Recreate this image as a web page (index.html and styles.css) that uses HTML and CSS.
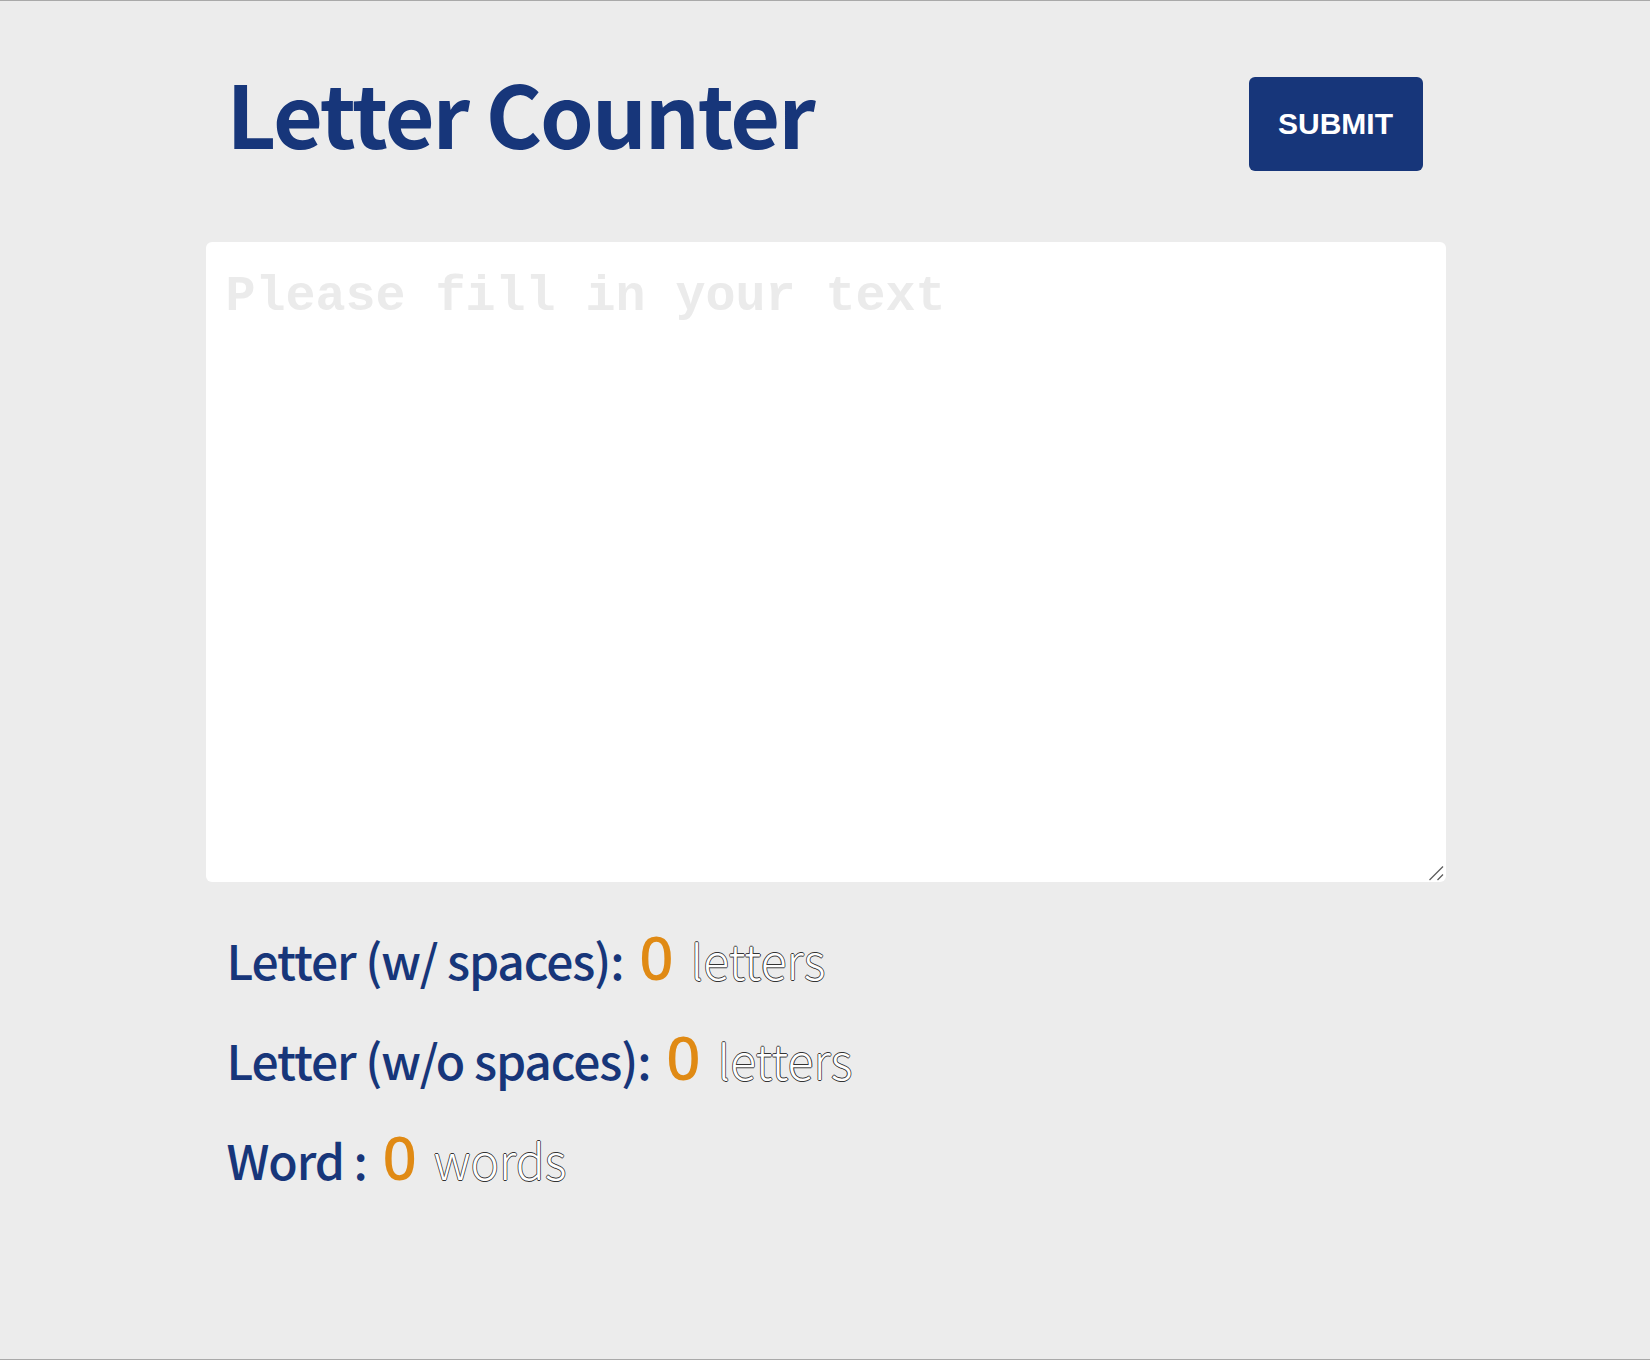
FILE: index.html
```html
<!DOCTYPE html>
<html lang="en">
<head>
<meta charset="utf-8">
<title>Letter Counter</title>
<link rel="stylesheet" href="styles.css">
</head>
<body>
<div class="page">
  <div class="container">
    <header class="header">
      <h1 class="title">Letter Counter</h1>
      <button class="submit" type="button">SUBMIT</button>
    </header>
    <div class="input-wrap">
      <textarea class="input" placeholder="Please fill in your text"></textarea>
      <svg class="grip" width="16" height="16" viewBox="0 0 16 16" aria-hidden="true">
        <line x1="1.5" y1="15" x2="15" y2="1.5" stroke="#5a5a5a" stroke-width="1.3"/>
        <line x1="9.5" y1="15" x2="15" y2="9.5" stroke="#5a5a5a" stroke-width="1.3"/>
      </svg>
    </div>
    <div class="stats">
      <p class="stat"><span class="label">Letter (w/ spaces):</span> <span class="num">0</span> <span class="unit">letters</span></p>
      <p class="stat"><span class="label">Letter (w/o spaces):</span> <span class="num">0</span> <span class="unit">letters</span></p>
      <p class="stat"><span class="label">Word :</span> <span class="num">0</span> <span class="unit">words</span></p>
    </div>
  </div>
</div>
</body>
</html>
```

FILE: styles.css
```css
html, body {
  margin: 0;
  padding: 0;
  background: #ececec;
}

.page {
  min-height: 1360px;
  box-sizing: border-box;
  border-top: 1px solid #a9a9a9;
  border-bottom: 1px solid #a9a9a9;
  background: #ececec;
  font-family: "Noto Sans CJK KR", "Noto Sans", sans-serif;
}

.container {
  width: 1240px;
  margin: 0 auto;
  padding-left: 1px;
}

.header {
  display: flex;
  justify-content: space-between;
  align-items: flex-start;
  padding: 0 23px 0 21px;
}

.title {
  margin: 61px 0 0 0;
  font-size: 86px;
  line-height: 100px;
  font-weight: 700;
  letter-spacing: -2px;
  color: #17367a;
}

.submit {
  margin-top: 76px;
  width: 174px;
  height: 94px;
  border: none;
  border-radius: 6px;
  background: #17367a;
  color: #ffffff;
  font-family: "Liberation Sans", Arial, sans-serif;
  font-weight: 700;
  font-size: 30px;
  padding: 0;
}

.input-wrap {
  position: relative;
  margin-top: 71px;
  width: 1240px;
  height: 640px;
}

.input {
  display: block;
  width: 1240px;
  height: 640px;
  box-sizing: border-box;
  border: none;
  border-radius: 6px;
  background: #ffffff;
  padding: 26px 20px 20px 20px;
  font-family: "Liberation Mono", "Courier New", monospace;
  font-size: 50px;
  font-weight: 700;
  color: #222;
  outline: none;
  resize: none;
}

.input::placeholder {
  color: #ebebeb;
}

.grip {
  position: absolute;
  right: 2px;
  bottom: 1px;
  pointer-events: none;
}

.stats {
  padding: 0 21px;
  margin-top: 45px;
}

.stat {
  margin: 0 0 40px 0;
  height: 60px;
  line-height: 60px;
  font-size: 48px;
  font-weight: 500;
  color: #17367a;
  white-space: nowrap;
}

.label {
  letter-spacing: -1.1px;
}

.num {
  margin-left: 5px;
  font-family: "Noto Sans", sans-serif;
  font-size: 60px;
  font-weight: 500;
  color: #e08a14;
}

.unit {
  margin-left: 6px;
  font-weight: 300;
  color: #ffffff;
  text-shadow: 0.8px 0 0 #333, -0.8px 0 0 #333, 0 0.8px 0 #333, 0 -0.8px 0 #333;
}
```
